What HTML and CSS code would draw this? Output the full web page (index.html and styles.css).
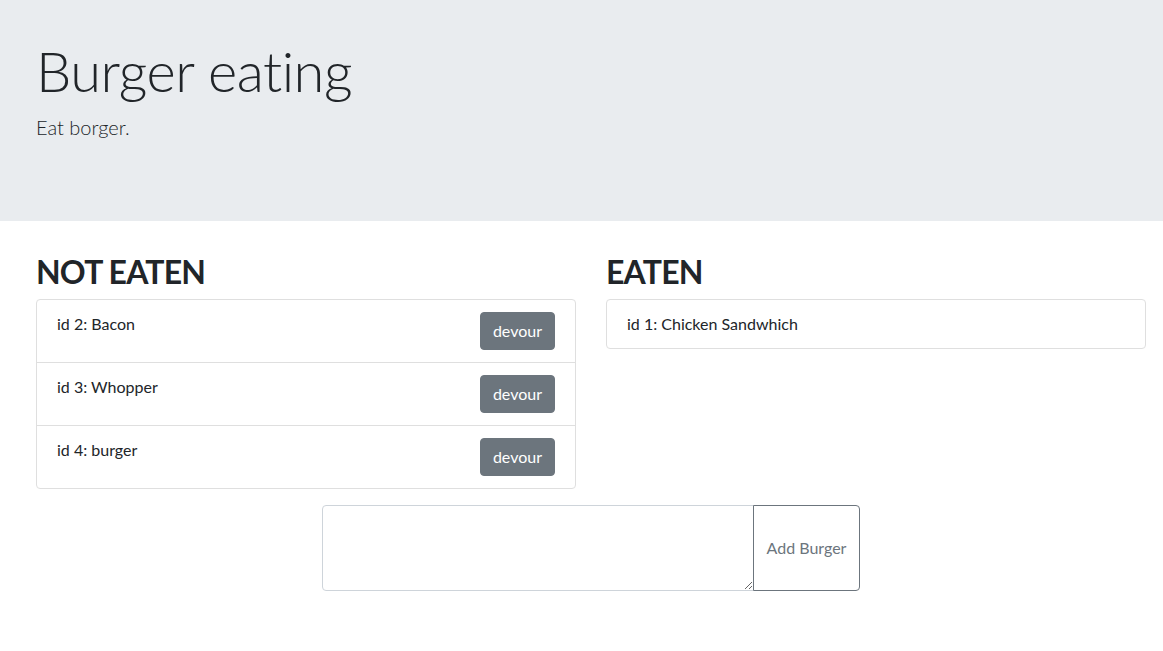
FILE: index.html
```html
<!DOCTYPE html>
<html lang="en">
<head>
<meta charset="utf-8">
<title>Burger eating</title>
<link rel="stylesheet" href="styles.css">
</head>
<body>
<header class="jumbotron">
  <div class="container">
    <h1 class="display">Burger eating</h1>
    <p class="lead">Eat borger.</p>
  </div>
</header>
<main class="container">
  <div class="row">
    <section class="col">
      <h2 class="col-title">NOT EATEN</h2>
      <ul class="list-group">
        <li class="list-item"><span>id 2: Bacon</span><button class="btn-devour">devour</button></li>
        <li class="list-item"><span>id 3: Whopper</span><button class="btn-devour">devour</button></li>
        <li class="list-item"><span>id 4: burger</span><button class="btn-devour">devour</button></li>
      </ul>
    </section>
    <section class="col">
      <h2 class="col-title">EATEN</h2>
      <ul class="list-group">
        <li class="list-item"><span>id 1: Chicken Sandwhich</span></li>
      </ul>
    </section>
  </div>
  <form class="add-form">
    <textarea class="add-input"></textarea>
    <button type="button" class="btn-add">Add Burger</button>
  </form>
</main>
</body>
</html>
```

FILE: styles.css
```css
* { box-sizing: border-box; }
body {
  margin: 0;
  font-family: Lato, "Liberation Sans", sans-serif;
  font-size: 16px;
  line-height: 1.5;
  color: #212529;
  background: #fff;
}
.container {
  padding-left: 36px;
  width: 1146px;
}
.jumbotron {
  background: #e9ecef;
  height: 221px;
  padding-top: 37px;
  margin-bottom: 32px;
}
.display {
  margin: 0 0 8px;
  font-size: 56px;
  font-weight: 300;
  line-height: 1.2;
  letter-spacing: -0.5px;
}
.lead {
  margin: 0;
  font-size: 20px;
  font-weight: 300;
  line-height: 1.5;
}
.row {
  display: flex;
  gap: 30px;
}
.col {
  width: 540px;
}
.col-title {
  margin: 0 0 8px;
  font-size: 32px;
  font-weight: 700;
  line-height: 1.2;
  letter-spacing: -0.8px;
}
.list-group {
  list-style: none;
  margin: 0;
  padding: 0;
  border: 1px solid #dfdfdf;
  border-radius: 4px;
}
.list-item {
  display: flex;
  justify-content: space-between;
  align-items: flex-start;
  padding: 12px 20px;
  border-top: 1px solid #dfdfdf;
}
.list-item:first-child { border-top: 0; }
.btn-devour {
  font: inherit;
  color: #fff;
  background: #6c757d;
  border: 1px solid #6c757d;
  border-radius: 4px;
  padding: 6px 12px;
  line-height: 24px;
  margin-bottom: 0;
}
.add-form {
  display: flex;
  justify-content: center;
  margin-top: 16px;
}
.add-input {
  width: 432px;
  height: 86px;
  border: 1px solid #ced4da;
  border-radius: 4px 0 0 4px;
  padding: 6px 12px;
  font: inherit;
  margin: 0;
}
.btn-add {
  width: 107px;
  height: 86px;
  font: inherit;
  color: #6c757d;
  background: #fff;
  border: 1px solid #6c757d;
  border-radius: 0 4px 4px 0;
  padding: 6px 12px;
  margin: 0 0 0 -1px;
}
```
